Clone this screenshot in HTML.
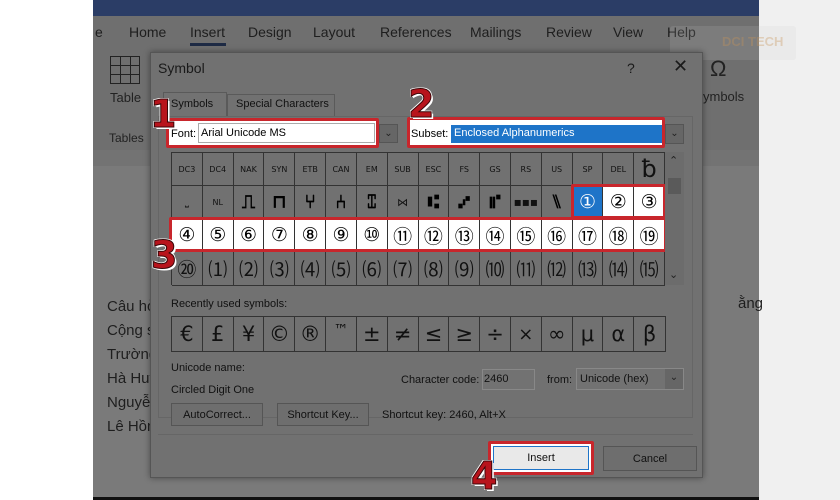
<!DOCTYPE html>
<html><head><meta charset="utf-8"><style>
*{margin:0;padding:0;box-sizing:border-box}
body{width:840px;height:500px;overflow:hidden;background:#fff;position:relative;font-family:"Liberation Sans","DejaVu Sans","Noto Sans CJK JP",sans-serif}
.a{position:absolute}
.t{position:absolute;white-space:nowrap}
.grid{position:absolute;left:171px;top:152px;width:494px;height:133px;display:grid;grid-template-columns:repeat(16,1fr);grid-template-rows:33px 33px 33px 34px;border-top:1px solid #333;border-left:1px solid #333}
.grid div{border-right:1px solid #333;border-bottom:1px solid #333;display:flex;align-items:center;justify-content:center;color:#111;font-size:19px;font-family:"DejaVu Sans","Noto Sans CJK JP",sans-serif}
.grid .w{background:#fff;color:#000}
.grid .s{background:#1e74c8;color:#fff}
.grid .sm{font-size:8px}
.grid .b{font-weight:bold;color:#000}
.rec{position:absolute;left:171px;top:316px;width:495px;height:36px;display:grid;grid-template-columns:repeat(16,1fr);border:1px solid #333}
.rec div{border-right:1px solid #333;display:flex;align-items:center;justify-content:center;font-size:21px;color:#111;font-family:"DejaVu Sans",sans-serif}
.red{position:absolute;border:3px solid #c8262c;border-radius:2px}
.num{position:absolute;font-weight:900;color:#b8141c;font-family:"DejaVu Sans","Liberation Sans",sans-serif;-webkit-text-stroke:1px #3a0608;text-shadow:1px 1px 0 #fff,-1px -1px 0 #fff,1px -1px 0 #fff,-1px 1px 0 #fff,2px 2px 0 #fff}
.btn{position:absolute;background:#6e6e6e;border:1px solid #555;font-size:11px;color:#111;display:flex;align-items:center;justify-content:center}
.tab{color:#1e1e1e;font-size:14px}
</style></head><body>
<div class="a" style="left:93px;top:0;width:666px;height:498px;background:#7a7a7a"></div>
<div class="a" style="left:759px;top:0;width:81px;height:500px;background:#f0f0f0"></div>
<div class="a" style="left:93px;top:0;width:666px;height:16px;background:#2b3d66"></div>
<div class="a" style="left:93px;top:16px;width:666px;height:134px;background:#6f6f6f"></div>
<div class="a" style="left:93px;top:150px;width:666px;height:16px;background:#737373"></div>
<div class="a" style="left:93px;top:497px;width:666px;height:3px;background:#111"></div>
<div class="t tab" style="left:95px;top:24px">e</div>
<div class="t tab" style="left:129px;top:24px">Home</div>
<div class="t tab" style="left:190px;top:24px">Insert</div>
<div class="a" style="left:190px;top:43px;width:36px;height:3px;background:#1e2b45"></div>
<div class="t tab" style="left:248px;top:24px">Design</div>
<div class="t tab" style="left:313px;top:24px">Layout</div>
<div class="t tab" style="left:380px;top:24px">References</div>
<div class="t tab" style="left:470px;top:24px">Mailings</div>
<div class="t tab" style="left:546px;top:24px">Review</div>
<div class="t tab" style="left:613px;top:24px">View</div>
<div class="t tab" style="left:667px;top:24px">Help</div>
<div class="a" style="left:110px;top:56px;width:30px;height:28px;border:1px solid #222;background:repeating-linear-gradient(90deg,transparent 0 9px,#222 9px 10px),repeating-linear-gradient(0deg,transparent 0 8px,#222 8px 9px)"></div>
<div class="t" style="left:110px;top:90px;font-size:13px;color:#222">Table</div>
<div class="t" style="left:109px;top:131px;font-size:12px;color:#222">Tables</div>
<div class="t" style="left:710px;top:56px;font-size:22px;color:#222">Ω</div>
<div class="t" style="left:703px;top:89px;font-size:13px;color:#222">ymbols</div>
<div class="a" style="left:670px;top:26px;width:126px;height:34px;background:rgba(200,200,200,.15);border-radius:3px"></div>
<div class="t" style="left:722px;top:34px;font-size:13px;font-weight:bold;color:rgba(200,150,90,.35)">DCI TECH</div>
<div class="t" style="left:107px;top:295px;font-size:15px;color:#1e1e1e;line-height:24px">Câu hỏ<br>Cộng s<br>Trường<br>Hà Huy<br>Nguyễ<br>Lê Hồn</div>
<div class="t" style="left:738px;top:295px;font-size:15px;color:#1e1e1e">ằng</div>
<div class="a" style="left:150px;top:52px;width:553px;height:426px;background:#717171;border:1px solid #555;box-shadow:0 0 6px rgba(0,0,0,.4)"></div>
<div class="t" style="left:158px;top:60px;font-size:14px;color:#1a1a1a">Symbol</div>
<div class="t" style="left:627px;top:60px;font-size:14px;color:#1a1a1a">?</div>
<div class="t" style="left:673px;top:56px;font-size:18px;color:#1a1a1a">✕</div>
<div class="a" style="left:163px;top:92px;width:64px;height:25px;background:#727272;border:1px solid #5a5a5a;border-bottom:none"></div>
<div class="t" style="left:171px;top:98px;font-size:11px;color:#111">Symbols</div>
<div class="a" style="left:227px;top:94px;width:108px;height:22px;border:1px solid #5a5a5a;border-bottom:none"></div>
<div class="t" style="left:236px;top:98px;font-size:11px;color:#111">Special Characters</div>
<div class="a" style="left:158px;top:116px;width:535px;height:302px;border:1px solid #666"></div>
<div class="a" style="left:168px;top:120px;width:209px;height:26px;background:#fff"></div>
<div class="t" style="left:171px;top:128px;font-size:11px;color:#000">Font:</div>
<div class="a" style="left:198px;top:123px;width:177px;height:20px;border:1px solid #aaa"></div>
<div class="t" style="left:201px;top:127px;font-size:11px;color:#000">Arial Unicode MS</div>
<div class="red" style="left:166px;top:118px;width:213px;height:30px"></div>
<div class="a" style="left:379px;top:124px;width:19px;height:19px;background:#666;border:1px solid #555;color:#222;font-size:10px;text-align:center;line-height:17px">⌄</div>
<div class="a" style="left:409px;top:120px;width:254px;height:26px;background:#fff"></div>
<div class="t" style="left:411px;top:128px;font-size:11px;color:#000">Subset:</div>
<div class="a" style="left:451px;top:125px;width:211px;height:18px;background:#1e74c8"></div>
<div class="t" style="left:454px;top:127px;font-size:11px;color:#fff">Enclosed Alphanumerics</div>
<div class="red" style="left:407px;top:117px;width:258px;height:31px"></div>
<div class="a" style="left:665px;top:124px;width:19px;height:20px;background:#666;border:1px solid #555;color:#222;font-size:10px;text-align:center;line-height:18px">⌄</div>
<div class="grid">
<div class="sm">DC3</div><div class="sm">DC4</div><div class="sm">NAK</div><div class="sm">SYN</div><div class="sm">ETB</div><div class="sm">CAN</div><div class="sm">EM</div><div class="sm">SUB</div><div class="sm">ESC</div><div class="sm">FS</div><div class="sm">GS</div><div class="sm">RS</div><div class="sm">US</div><div class="sm">SP</div><div class="sm">DEL</div><div style="font-size:24px">ƀ</div>
<div style="font-size:10px">⎵</div><div class="sm">NL</div><div class="b">⎍</div><div class="b">⊓</div><div class="b">⑂</div><div class="b">⑃</div><div class="b">⑄</div><div style="font-size:11px">⋈</div><div class="b">⑆</div><div class="b">⑇</div><div class="b">⑈</div><div style="font-size:12px">▪▪▪</div><div class="b">⑊</div><div class="s">①</div><div class="w">②</div><div class="w">③</div>
<div class="w">④</div><div class="w">⑤</div><div class="w">⑥</div><div class="w">⑦</div><div class="w">⑧</div><div class="w">⑨</div><div class="w">⑩</div><div class="w">⑪</div><div class="w">⑫</div><div class="w">⑬</div><div class="w">⑭</div><div class="w">⑮</div><div class="w">⑯</div><div class="w">⑰</div><div class="w">⑱</div><div class="w">⑲</div>
<div>⑳</div><div>⑴</div><div>⑵</div><div>⑶</div><div>⑷</div><div>⑸</div><div>⑹</div><div>⑺</div><div>⑻</div><div>⑼</div><div>⑽</div><div>⑾</div><div>⑿</div><div>⒀</div><div>⒁</div><div>⒂</div>
</div>
<div class="red" style="left:571px;top:184px;width:95px;height:35px"></div>
<div class="red" style="left:169px;top:217px;width:498px;height:35px"></div>
<div class="a" style="left:665px;top:152px;width:19px;height:133px;background:#6c6c6c"></div>
<div class="t" style="left:669px;top:154px;font-size:11px;color:#222">⌃</div>
<div class="a" style="left:668px;top:178px;width:13px;height:16px;background:#5a5a5a"></div>
<div class="t" style="left:669px;top:268px;font-size:11px;color:#222">⌄</div>
<div class="t" style="left:171px;top:298px;font-size:11px;color:#111">Recently used symbols:</div>
<div class="rec"><div>€</div><div>£</div><div>¥</div><div>©</div><div>®</div><div style="font-size:15px;align-items:flex-start;padding-top:4px">™</div><div>±</div><div>≠</div><div>≤</div><div>≥</div><div>÷</div><div style="font-size:18px">×</div><div>∞</div><div>μ</div><div>α</div><div style="border:none">β</div></div>
<div class="t" style="left:171px;top:362px;font-size:11px;color:#111">Unicode name:</div>
<div class="t" style="left:171px;top:384px;font-size:11px;color:#111">Circled Digit One</div>
<div class="t" style="left:401px;top:374px;font-size:11px;color:#111">Character code:</div>
<div class="a" style="left:482px;top:369px;width:53px;height:21px;border:1px solid #888;background:#727272"></div>
<div class="t" style="left:484px;top:373px;font-size:11px;color:#111">2460</div>
<div class="t" style="left:547px;top:374px;font-size:11px;color:#111">from:</div>
<div class="a" style="left:576px;top:368px;width:108px;height:22px;border:1px solid #888;background:#727272"></div>
<div class="t" style="left:580px;top:373px;font-size:11px;color:#111">Unicode (hex)</div>
<div class="a" style="left:665px;top:369px;width:18px;height:20px;background:#666;color:#222;font-size:10px;text-align:center;line-height:18px">⌄</div>
<div class="btn" style="left:171px;top:403px;width:92px;height:23px">AutoCorrect...</div>
<div class="btn" style="left:277px;top:403px;width:92px;height:23px">Shortcut Key...</div>
<div class="t" style="left:382px;top:409px;font-size:11px;color:#111">Shortcut key: 2460, Alt+X</div>
<div class="a" style="left:158px;top:434px;width:535px;height:1px;background:#666"></div>
<div class="a" style="left:490px;top:443px;width:102px;height:30px;background:#fff"></div>
<div class="btn" style="left:493px;top:446px;width:96px;height:24px;background:#e9e9e9;border:1px solid #1e74c8">Insert</div>
<div class="red" style="left:488px;top:441px;width:106px;height:34px"></div>
<div class="btn" style="left:603px;top:446px;width:94px;height:25px">Cancel</div>
<div class="num" style="left:150px;top:92px;font-size:38px">1</div>
<div class="num" style="left:408px;top:82px;font-size:38px">2</div>
<div class="num" style="left:151px;top:233px;font-size:38px">3</div>
<div class="num" style="left:471px;top:454px;font-size:38px">4</div>
</body></html>
